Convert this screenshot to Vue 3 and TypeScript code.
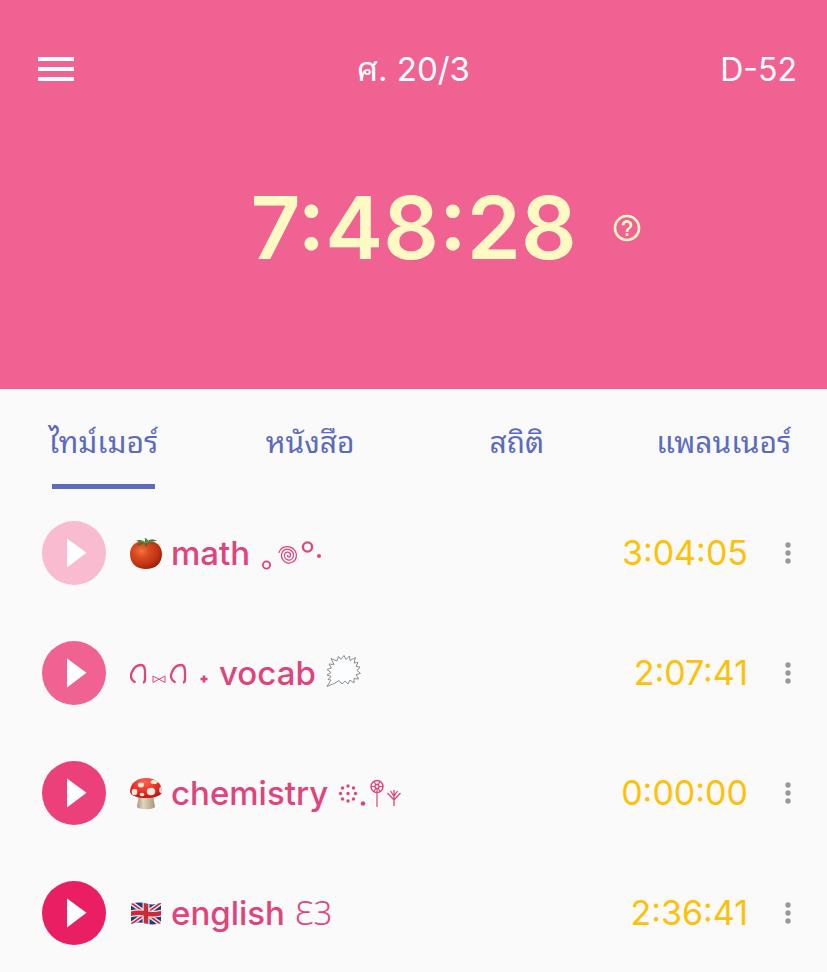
<script setup lang="ts">
interface Subject {
  id: string
  name: string
  time: string
  tone: string
}

const tabs: string[] = ['ไทม์เมอร์', 'หนังสือ', 'สถิติ', 'แพลนเนอร์']

const subjects: Subject[] = [
  { id: 'math', name: 'math', time: '3:04:05', tone: '#f8bbd0' },
  { id: 'vocab', name: 'vocab', time: '2:07:41', tone: '#f06292' },
  { id: 'chemistry', name: 'chemistry', time: '0:00:00', tone: '#ec407a' },
  { id: 'english', name: 'english', time: '2:36:41', tone: '#e91e63' },
]
</script>

<template>
  <div class="screen">
    <header class="hero">
      <div class="topbar">
        <button class="plain menu" type="button" aria-label="Menu">
          <svg width="36" height="24" viewBox="0 0 36 24" fill="#fff">
            <path d="M0 0h36v4H0zM0 10h36v4H0zM0 20h36v4H0z" />
          </svg>
        </button>
        <h1 class="date">ศ. 20/3</h1>
        <span class="dday">D-52</span>
      </div>
      <div class="total">
        <span></span>
        <span class="clock">7:48:28</span>
        <button class="plain help" type="button" aria-label="Help">
          <svg width="32" height="32" viewBox="0 0 24 24" fill="#fff9c4">
            <path d="M11 18h2v-2h-2v2zm1-16C6.480 2 2 6.480 2 12s4.480 10 10 10 10-4.480 10-10S17.520 2 12 2zm0 18c-4.410 0-8-3.590-8-8s3.590-8 8-8 8 3.590 8 8-3.590 8-8 8zm0-14c-2.210 0-4 1.790-4 4h2c0-1.100.9-2 2-2s2 .9 2 2c0 2-3 1.750-3 5h2c0-2.250 3-2.500 3-5 0-2.210-1.790-4-4-4z" />
          </svg>
        </button>
      </div>
    </header>

    <nav class="tabs">
      <a v-for="(tab, i) in tabs" :key="tab" href="#" class="tab" :class="{ active: i === 0 }">{{ tab }}</a>
    </nav>

    <ul class="list">
      <li v-for="s in subjects" :key="s.id" class="row">
        <button class="plain play" type="button" :aria-label="'Start ' + s.name" :style="{ backgroundColor: s.tone }">
          <svg width="20" height="30" viewBox="0 0 20 30" fill="#fff"><path d="M0 0.500L19.500 14.800L0 29.500z" /></svg>
        </button>

        <div class="name">
          <svg v-if="s.id === 'math'" width="32" height="34" viewBox="0 0 32 34">
            <defs>
              <radialGradient id="tomato" cx="0.36" cy="0.35" r="0.75">
                <stop offset="0" stop-color="#f0743c" />
                <stop offset="0.3" stop-color="#dc4c22" />
                <stop offset="0.7" stop-color="#c03212" />
                <stop offset="1" stop-color="#8d1b08" />
              </radialGradient>
            </defs>
            <path d="M16 6.500C23 3 32 8 32 18C32 28 25 33 16 33C7 33 0 28 0 18C0 8 9 3 16 6.500z" fill="url(#tomato)" />
            <path d="M15 6C12 4 9 3 6 5C8 5 10 6 11 7C9 7 8 8 7 10C10 9 13 8 14 7L16 11L18 7C20 7 22 7 25 9C24 7 22 6 21 6C23 5 25 5 27 5C24 3 20 3 18 5L17 3L15 2z" fill="#416c2c" />
            <path d="M15 2L17 6M10 5L15 7L22 5" fill="none" stroke="#6f964a" />
          </svg>
          <svg v-else-if="s.id === 'vocab'" width="80" height="34" viewBox="0 0 80 34">
            <g fill="none" stroke="#e0447c" stroke-width="2.300">
              <path d="M5.500 26.500C1 24 0 20 2 16C4 11 8 9 11 9C14.500 9 15 12 15 16V23Q15 26.500 13 26.500" />
              <path d="M45.500 26.500C41 24 40 20 42 16C44 11 48 9 51 9C54.500 9 55 12 55 16V23Q55 26.500 53 26.500" />
              <path d="M23 20V26.500L35 20V26.500z" stroke-width="1" />
              <path d="M74 19.500V26.500M70.500 23H77.500" stroke-width="2.700" />
            </g>
          </svg>
          <svg v-else-if="s.id === 'chemistry'" width="32" height="34" viewBox="0 0 32 34">
            <defs>
              <linearGradient id="stem" x1="0" x2="1" y1="0" y2="0">
                <stop offset="0" stop-color="#a89a80" />
                <stop offset="0.35" stop-color="#e0d5be" />
                <stop offset="1" stop-color="#a7977c" />
              </linearGradient>
              <radialGradient id="cap" cx="0.45" cy="0.25" r="0.75">
                <stop offset="0" stop-color="#ff6250" />
                <stop offset="0.6" stop-color="#e52a24" />
                <stop offset="1" stop-color="#ab1718" />
              </radialGradient>
              <clipPath id="capShape"><path d="M0 16C0 7 7 2 16 2S32 7 32 16C31 20 24 22 16 22S1 20 0 16z" /></clipPath>
            </defs>
            <path d="M8 20H24C23 24 25 28 25 31C23 34 9 34 7 31C7 28 9 24 8 20z" fill="url(#stem)" />
            <g clip-path="url(#capShape)">
              <rect width="32" height="24" fill="url(#cap)" />
              <g fill="#f3e8d7">
                <ellipse cx="21" cy="15.500" rx="4.200" ry="3.800" />
                <ellipse cx="11" cy="9" rx="3" ry="2.400" />
                <ellipse cx="4.500" cy="16" rx="2.800" ry="3.300" />
                <ellipse cx="24" cy="6" rx="3.500" ry="2" />
                <ellipse cx="31" cy="14" rx="1.800" ry="3" />
                <ellipse cx="12" cy="18.500" rx="2.300" ry="1.800" />
              </g>
            </g>
          </svg>
          <svg v-else width="32" height="34" viewBox="0 0 32 34">
            <defs>
              <clipPath id="flag"><path d="M1 8Q9 5.500 16 7.500T31 7V27Q24 29.500 16 27.500T1 28z" /></clipPath>
            </defs>
            <g clip-path="url(#flag)">
              <rect width="32" height="34" fill="#243a78" />
              <path d="M0 6L32 29M32 6L0 29" stroke="#e6e6ee" stroke-width="4.500" />
              <path d="M0 6L32 29M32 6L0 29" stroke="#c22a3a" stroke-width="1.600" />
              <path d="M16 4V31M0 18Q8 16 16 17.500T32 17" fill="none" stroke="#e6e6ee" stroke-width="7" />
              <path d="M16 4V31M0 18Q8 16 16 17.500T32 17" fill="none" stroke="#cb2a39" stroke-width="4.500" />
            </g>
          </svg>

          <span class="label">{{ s.name }}</span>

          <svg v-if="s.id === 'math'" width="64" height="34" viewBox="0 0 64 34">
            <g fill="none" stroke="#e0447c">
              <circle cx="6.500" cy="29" r="3.600" stroke-width="1.800" />
              <circle cx="47.500" cy="11" r="4.600" stroke-width="2.300" />
              <path d="M27.500 19a1.500 1.500 0 0 0 3 0a3 3 0 0 0 -6 0a4.500 4.500 0 0 0 9 0a6 6 0 0 0 -12 0a7.500 7.500 0 0 0 15 0a9 8.500 0 0 0 -18 0" transform="rotate(15 27 19)" stroke-width="1.300" />
            </g>
            <circle cx="59" cy="20" r="2" fill="#e0447c" />
          </svg>
          <svg v-else-if="s.id === 'vocab'" width="36" height="36" viewBox="0 2 36 36">
            <path d="M1 33.500L5 27L2 26.500L5 23.500L1 22L5 19.500L1 16.500L5.500 15L3 11L8 11.500L5 5.500L11 8L12.500 3.500L15 6.500L18 2.500L20 6.500L23.500 3L24 7.500L29.500 4.500L28 10L32 9.500L30 13.500L34 14L31 17.500L34.500 20.500L30 21.500L32.500 26L28 25.500L28 30L24 27L22 31L19 28L16 31L13 27.500L9 30z" fill="#fcfdff" stroke="#8e8e92" stroke-width="1" />
          </svg>
          <svg v-else-if="s.id === 'chemistry'" width="64" height="34" viewBox="0 0 64 34">
            <g fill="#e0447c">
              <circle cx="10" cy="10" r="1.700" /><circle cx="15.500" cy="12" r="1.700" />
              <circle cx="17.500" cy="17.500" r="1.700" /><circle cx="15.500" cy="23" r="1.700" />
              <circle cx="10" cy="25" r="1.700" /><circle cx="4.500" cy="23" r="1.700" />
              <circle cx="2.500" cy="17.500" r="1.700" /><circle cx="4.500" cy="12" r="1.700" />
              <circle cx="10" cy="17.500" r="1.700" /><circle cx="25" cy="27.500" r="2.300" />
            </g>
            <g fill="none" stroke="#e0447c" stroke-width="1.300">
              <circle cx="39" cy="10.500" r="6" stroke-width="1.500" /><circle cx="39" cy="10.500" r="2" />
              <path d="M39 12.500V31M33 10.500H37M41 10.500H45M36 5.500L38 9M42 5.500L40 9M36 15.500L38 12M42 15.500L40 12" stroke-width="1.200" />
              <path d="M56 30V14M49.500 17L56 24L62.500 17M52.500 15L56 20L59.500 15" />
            </g>
          </svg>
          <span v-else class="wings">Ɛ3</span>
        </div>

        <time class="time">{{ s.time }}</time>
        <button class="plain more" type="button" :aria-label="'Options for ' + s.name">
          <svg width="6" height="22" viewBox="0 0 6 22" fill="#999">
            <circle cx="3" cy="3" r="2.700" /><circle cx="3" cy="11" r="2.700" /><circle cx="3" cy="19" r="2.700" />
          </svg>
        </button>
      </li>
    </ul>
  </div>
</template>

<style>
body {
  margin: 0;
  background: #fafafa;
}
</style>

<style scoped>
.screen {
  font-family: Inter, "Noto Sans Thai Looped", Loma, Garuda, Waree, Laksaman, "Noto Sans Thai", "Noto Sans", sans-serif;
  background: #fafafa;
}
.plain {
  display: flex;
  align-items: center;
  justify-content: center;
  padding: 0;
  border: 0;
  background: none;
  cursor: pointer;
}
svg {
  display: block;
  flex: none;
}
.hero {
  box-sizing: border-box;
  min-height: 389px;
  padding: 44px 30px 0;
  background: #f06292;
  color: #fff;
}
.topbar {
  display: grid;
  grid-template-columns: 1fr auto 1fr;
  align-items: baseline;
  height: 50px;
}
.menu {
  align-self: center;
  justify-self: start;
  margin-left: 8px;
}
.date {
  margin: 0;
  font-size: 33px;
  font-weight: 400;
  line-height: 50px;
}
.dday {
  justify-self: end;
  font-size: 32px;
  line-height: 48px;
}
.total {
  display: grid;
  grid-template-columns: 1fr auto 1fr;
  align-items: center;
  margin-top: 80px;
}
.clock {
  color: #fff9c4;
  font-size: 87px;
  font-weight: 600;
  line-height: 108px;
}
.help {
  justify-self: start;
  margin-left: 34px;
}
.tabs {
  display: grid;
  grid-template-columns: repeat(4, 1fr);
}
.tab {
  position: relative;
  padding-top: 6px;
  color: #5c6bc0;
  font-size: 30px;
  line-height: 94px;
  text-align: center;
  text-decoration: none;
}
.active::after {
  content: "";
  position: absolute;
  bottom: 0;
  left: 25%;
  width: 50%;
  height: 5px;
  background: #5c6bc0;
}
.list {
  margin: 0;
  padding: 4px 36px 0 42px;
  list-style: none;
}
.row {
  display: flex;
  align-items: center;
  height: 120px;
}
.play {
  width: 64px;
  height: 64px;
  padding-left: 6px;
  border-radius: 50%;
}
.name {
  display: flex;
  flex: 1;
  align-items: center;
  margin-left: 24px;
  color: #e0447c;
}
.label {
  margin: 0 10px 0 9px;
  font-size: 33px;
  font-weight: 500;
  line-height: 50px;
}
.wings {
  font-family: "Noto Sans", "Open Sans", sans-serif;
  font-size: 33px;
  font-weight: 300;
  line-height: 50px;
}
.time {
  color: #ffc107;
  font-size: 34px;
  line-height: 50px;
}
.more {
  width: 6px;
  margin-left: 37px;
}
</style>
